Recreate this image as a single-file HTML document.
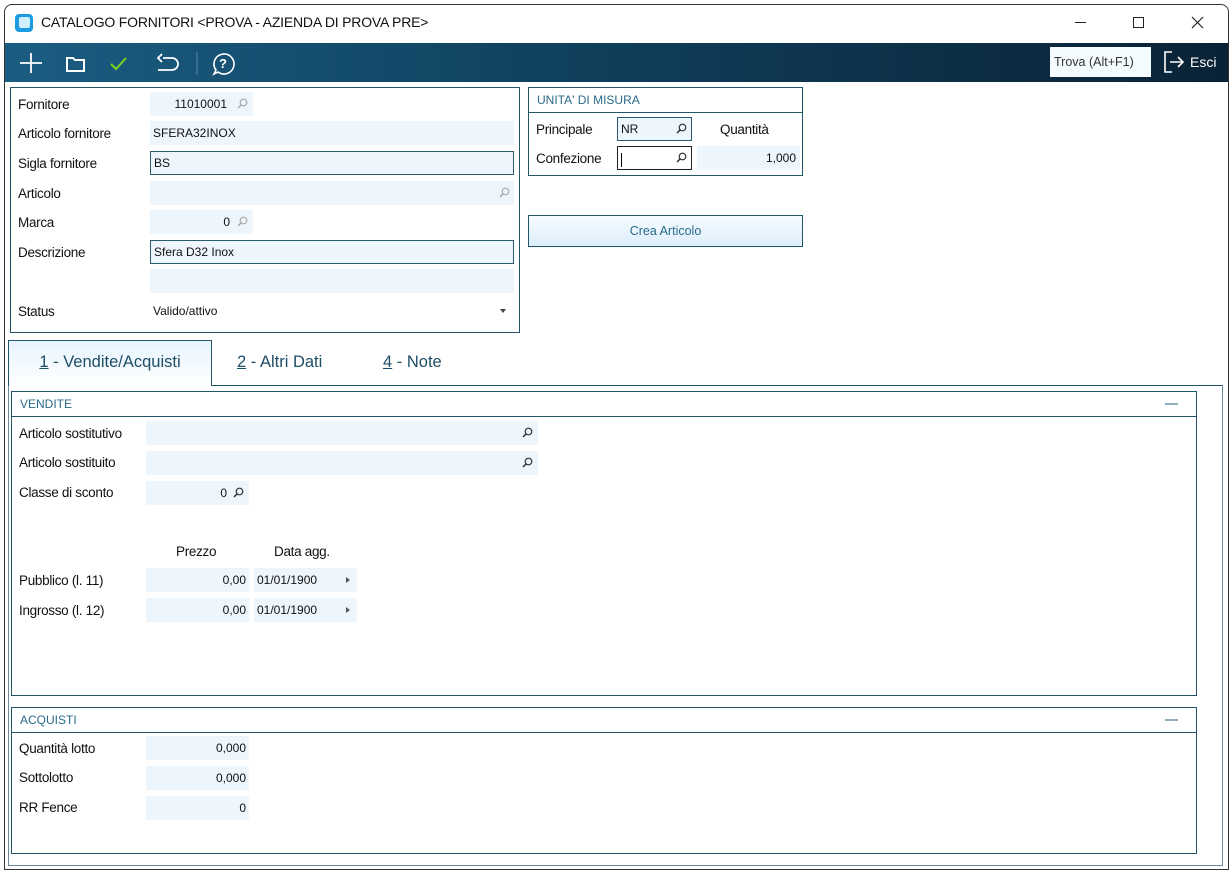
<!DOCTYPE html>
<html><head><meta charset="utf-8"><style>
*{box-sizing:border-box;margin:0;padding:0}
body{width:1232px;height:873px;background:#fff;position:relative;overflow:hidden;font-family:"Liberation Sans",sans-serif;font-size:13px;color:#111}
.a{position:absolute}
.win{left:4px;top:4px;width:1225px;height:866px;border:1px solid #333;border-radius:8px 8px 0 0;background:#fff;overflow:hidden}
.tb{left:5px;top:43px;width:1223px;height:39px;background:linear-gradient(90deg,#1b5d82,#0f3e5a 50%,#0a2236)}
.lbl{position:absolute;font-size:13.5px;letter-spacing:-0.3px}
.in{position:absolute;background:#eef6fd;height:24px;font-size:12px;line-height:24px;padding:0 3px}
.bd2{border:1px solid #2b5a6e;background:#eef6fd}
.r{text-align:right;padding-right:8px}
.box{position:absolute;border:1px solid #23566b}
.hdr{position:absolute;left:0;right:0;top:0;height:25px;border-bottom:1px solid #23566b;color:#2a6a8a;font-size:12px;line-height:25px;padding-left:8px}
.mg{position:absolute;width:11px;height:11px}
.min{position:absolute;width:13px;height:2px;background:#8fb0bf;top:11px;right:18px}
</style></head><body>
<svg width="0" height="0" style="position:absolute"><defs><symbol id="m" viewBox="0 0 11 11"><circle cx="6.5" cy="4.5" r="3.3" fill="none" stroke="currentColor" stroke-width="1.2"/><path d="M4.2 6.8L1 10" stroke="currentColor" stroke-width="1.5"/></symbol></defs></svg>
<div class="a win"></div>
<!-- title -->
<div class="a" style="left:15px;top:14px;width:18px;height:18px;background:#1e9be0;border-radius:4px"></div>
<div class="a" style="left:19px;top:17px;width:11px;height:11px;background:#cfeefe;border-radius:2px"></div>
<div class="a" style="left:41px;top:14px;font-size:14px;letter-spacing:-0.2px">CATALOGO FORNITORI &lt;PROVA - AZIENDA DI PROVA PRE&gt;</div>
<div class="a" style="left:1075px;top:22px;width:11px;height:1px;background:#222"></div>
<div class="a" style="left:1133px;top:17px;width:11px;height:11px;border:1px solid #222"></div>
<svg class="a" style="left:1191px;top:16px" width="13" height="13"><path d="M1 1L12 12M12 1L1 12" stroke="#222" stroke-width="1.2"/></svg>
<!-- toolbar -->
<div class="a tb"></div>
<svg class="a" style="left:16px;top:50px" width="230" height="26" fill="none" stroke="#fff" stroke-width="1.8">
<path d="M15 3V23M4 13H26"/>
<path d="M51 8h6l2 2h9v11H51z" stroke-width="2"/>
<path d="M95 14l5 5 10-11" stroke="#7ed321" stroke-width="2"/>
<path d="M147 8h9a6 6 0 010 12h-14M146 4l-4 4 4 4" stroke-width="1.8"/>
<path d="M181 2v23" stroke="#5a8aa5" stroke-width="1"/>
<path d="M198 24l2-4a10 10 0 112 2z" stroke-width="1.6"/>
<text x="203" y="18" fill="#fff" stroke="none" font-size="13" font-family="Liberation Sans" font-weight="bold">?</text>
</svg>
<div class="a" style="left:1050px;top:47px;width:101px;height:30px;background:#f4fbff;font-size:12.5px;line-height:30px;padding-left:4px;color:#333">Trova (Alt+F1)</div>
<svg class="a" style="left:1163px;top:51px" width="24" height="22" fill="none" stroke="#fff" stroke-width="1.6"><path d="M9 1H2v20h7M7 11h13M15 6l5 5-5 5"/></svg>
<div class="a" style="left:1190px;top:54px;color:#fff;font-size:14px">Esci</div>

<!-- left box -->
<div class="box" style="left:10px;top:87px;width:510px;height:246px"></div>
<div class="lbl" style="left:18px;top:97px">Fornitore</div>
<div class="in r" style="left:150px;top:92px;width:103px;padding-right:26px">11010001</div><svg class="mg" style="left:237px;top:98px;color:#aaa"><use href="#m"/></svg>
<div class="lbl" style="left:18px;top:126px">Articolo fornitore</div>
<div class="in" style="left:150px;top:121px;width:364px">SFERA32INOX</div>
<div class="lbl" style="left:18px;top:156px">Sigla fornitore</div>
<div class="in bd2" style="left:150px;top:151px;width:364px;line-height:22px">BS</div>
<div class="lbl" style="left:18px;top:186px">Articolo</div>
<div class="in" style="left:150px;top:181px;width:364px"></div><svg class="mg" style="left:499px;top:187px;color:#aaa"><use href="#m"/></svg>
<div class="lbl" style="left:18px;top:215px">Marca</div>
<div class="in r" style="left:150px;top:210px;width:103px;padding-right:23px">0</div><svg class="mg" style="left:237px;top:216px;color:#aaa"><use href="#m"/></svg>
<div class="lbl" style="left:18px;top:245px">Descrizione</div>
<div class="in bd2" style="left:150px;top:240px;width:364px;line-height:22px">Sfera D32 Inox</div>
<div class="in" style="left:150px;top:269px;width:364px"></div>
<div class="lbl" style="left:18px;top:304px">Status</div>
<div class="in" style="left:150px;top:299px;width:364px;background:#fff">Valido/attivo</div>
<div class="a" style="left:500px;top:309px;border:3px solid transparent;border-top:4px solid #444"></div>

<!-- right box -->
<div class="box" style="left:528px;top:87px;width:275px;height:89px"><div class="hdr">UNITA' DI MISURA</div></div>
<div class="lbl" style="left:536px;top:122px">Principale</div>
<div class="in bd2" style="left:617px;top:117px;width:75px;line-height:22px">NR</div><svg class="mg" style="left:676px;top:123px;color:#333"><use href="#m"/></svg>
<div class="lbl" style="left:720px;top:122px">Quantità</div>
<div class="lbl" style="left:536px;top:151px">Confezione</div>
<div class="in" style="left:617px;top:146px;width:75px;border:1.5px solid #222;background:#fff"><span style="display:inline-block;width:1px;height:14px;background:#000;vertical-align:middle"></span></div><svg class="mg" style="left:676px;top:152px;color:#333"><use href="#m"/></svg>
<div class="in r" style="left:697px;top:146px;width:103px;padding-right:4px">1,000</div>
<div class="a" style="left:528px;top:215px;width:275px;height:32px;border:1px solid #23566b;background:linear-gradient(#f6fbff,#ddeefb);text-align:center;line-height:30px;color:#2a6a8a;font-size:12.5px">Crea Articolo</div>

<!-- tabs -->
<div class="a" style="left:8px;top:385px;width:1215px;height:481px;border:1px solid #6b8a99;border-top:1px solid #23566b"></div>
<div class="a" style="left:8px;top:340px;width:204px;height:46px;border:1px solid #23566b;border-bottom:none;background:linear-gradient(#e6f4fd,#fff);text-align:center;line-height:43px;font-size:16.5px;color:#1e4d66"><u>1</u> - Vendite/Acquisti</div>
<div class="a" style="left:237px;top:353px;font-size:16.5px;color:#1e4d66"><u>2</u> - Altri Dati</div>
<div class="a" style="left:383px;top:353px;font-size:16.5px;color:#1e4d66"><u>4</u> - Note</div>

<!-- vendite -->
<div class="box" style="left:11px;top:391px;width:1186px;height:305px"><div class="hdr">VENDITE</div><div class="min"></div></div>
<div class="lbl" style="left:19px;top:426px">Articolo sostitutivo</div>
<div class="in" style="left:146px;top:421px;width:392px"></div><svg class="mg" style="left:522px;top:427px;color:#333"><use href="#m"/></svg>
<div class="lbl" style="left:19px;top:455px">Articolo sostituito</div>
<div class="in" style="left:146px;top:451px;width:392px"></div><svg class="mg" style="left:522px;top:457px;color:#333"><use href="#m"/></svg>
<div class="lbl" style="left:19px;top:485px">Classe di sconto</div>
<div class="in r" style="left:146px;top:481px;width:103px;padding-right:22px">0</div><svg class="mg" style="left:233px;top:487px;color:#333"><use href="#m"/></svg>
<div class="lbl" style="left:176px;top:544px">Prezzo</div>
<div class="lbl" style="left:274px;top:544px">Data agg.</div>
<div class="lbl" style="left:19px;top:573px">Pubblico (l. 11)</div>
<div class="in r" style="left:146px;top:568px;width:103px;padding-right:3px">0,00</div>
<div class="in" style="left:254px;top:568px;width:103px">01/01/1900</div>
<div class="a" style="left:346px;top:577px;border:3px solid transparent;border-left:4px solid #555"></div>
<div class="lbl" style="left:19px;top:603px">Ingrosso (l. 12)</div>
<div class="in r" style="left:146px;top:598px;width:103px;padding-right:3px">0,00</div>
<div class="in" style="left:254px;top:598px;width:103px">01/01/1900</div>
<div class="a" style="left:346px;top:607px;border:3px solid transparent;border-left:4px solid #555"></div>

<!-- acquisti -->
<div class="box" style="left:11px;top:707px;width:1186px;height:147px"><div class="hdr">ACQUISTI</div><div class="min"></div></div>
<div class="lbl" style="left:19px;top:741px">Quantità lotto</div>
<div class="in r" style="left:146px;top:736px;width:103px;padding-right:3px">0,000</div>
<div class="lbl" style="left:19px;top:770px">Sottolotto</div>
<div class="in r" style="left:146px;top:766px;width:103px;padding-right:3px">0,000</div>
<div class="lbl" style="left:19px;top:800px">RR Fence</div>
<div class="in r" style="left:146px;top:796px;width:103px;padding-right:3px">0</div>
</body></html>
